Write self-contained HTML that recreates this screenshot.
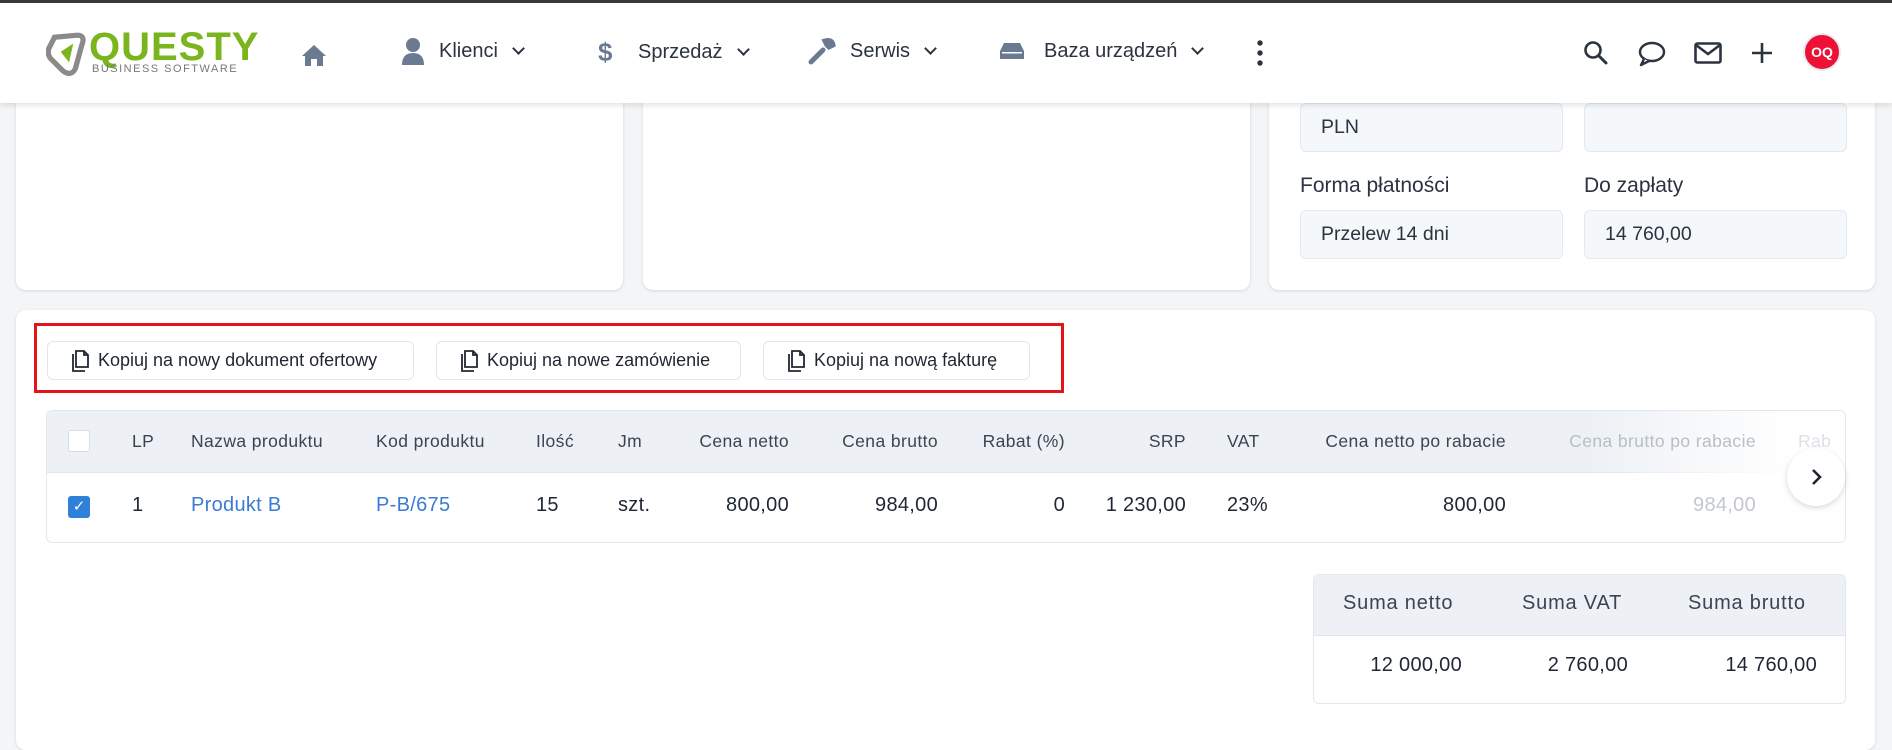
<!DOCTYPE html>
<html><head><meta charset="utf-8"><style>
*{box-sizing:border-box;margin:0;padding:0}
body{width:1892px;height:725px;overflow:hidden;background:#f4f5f7;font-family:"Liberation Sans",sans-serif;color:#2b3340;position:relative}
.a{position:absolute}
.card{position:absolute;background:#fff;border-radius:10px;box-shadow:0 1px 3px rgba(0,0,0,.12)}
.inp{position:absolute;background:#f5f8fb;border:1px solid #e3e9f0;border-radius:6px;font-size:19.5px;padding:0 20px;display:flex;align-items:center}
.lbl{position:absolute;font-size:21px;color:#2b3340}
.nav{position:absolute;top:40px;font-size:20px;color:#2b3340;display:flex;align-items:center;gap:8px;white-space:nowrap}
.chev{display:inline-block;width:9px;height:9px;border-right:2.2px solid #2b3340;border-bottom:2.2px solid #2b3340;transform:rotate(45deg);margin:-6px 0 0 8px}
.btn{position:absolute;top:341px;height:39px;border:1px solid #e1e6ec;border-radius:6px;background:#fff;font-size:18px;display:flex;align-items:center;padding-left:22px;gap:8px;color:#1f2733;white-space:nowrap}
.th{position:absolute;top:431px;font-size:17.5px;letter-spacing:.4px;color:#3b4452;white-space:nowrap}
.td{position:absolute;top:494px;font-size:20px;letter-spacing:.3px;color:#1f2733;white-space:nowrap}
.r{text-align:right}
</style></head><body>
<div class="a" style="left:0;top:0;width:1892px;height:3px;background:#3a3a3a"></div>
<div class="a" style="left:0;top:3px;width:1892px;height:100px;background:#fff;box-shadow:0 2px 6px rgba(0,0,0,.12);z-index:5">
 <svg class="a" style="left:46px;top:28px" width="42" height="46" viewBox="0 0 40 44"><path d="M8 6 L30 4 Q38 4 34 14 L28 36 Q24 44 16 38 L4 26 Q0 20 4 14 Z" fill="none" stroke="#8a8a8a" stroke-width="5"/><path d="M14 20 L26 12 L22 30 Z" fill="#7ab51d"/></svg>
 <div class="a" style="left:89px;top:22px;font-size:40px;font-weight:bold;color:#7ab51d;letter-spacing:1px;line-height:44px">QUESTY</div>
 <div class="a" style="left:92px;top:60px;font-size:11px;color:#777;letter-spacing:1.5px">BUSINESS SOFTWARE</div>
 <svg class="a" style="left:301px;top:40px" width="26" height="24" viewBox="0 0 26 24"><path d="M13 2 L1 13 L4 13 L4 23 L10 23 L10 16 L16 16 L16 23 L22 23 L22 13 L25 13 Z" fill="#6b7a90"/></svg>
</div>
<div style="position:absolute;z-index:6;left:0;top:0">
 <div class="nav" style="left:401px;top:37px"><svg width="24" height="28" viewBox="0 0 24 28"><circle cx="12" cy="8" r="7" fill="#6b7a90"/><path d="M1 28 Q1 16 12 16 Q23 16 23 28Z" fill="#6b7a90"/></svg><span style="margin-left:6px">Klienci</span><span class="chev"></span></div>
 <div class="nav" style="left:598px;top:37px"><span style="color:#6b7a90;font-size:26px;font-weight:bold;width:22px">$</span><span style="margin-left:10px">Sprzedaż</span><span class="chev"></span></div>
 <div class="nav" style="left:808px;top:37px"><svg width="28" height="28" viewBox="0 0 28 28"><path d="M3 25 L15 13 M17 4 Q24 2 25 8 L21 10 L19 8 Z" stroke="#6b7a90" stroke-width="5" fill="#6b7a90" stroke-linecap="round"/></svg><span style="margin-left:6px">Serwis</span><span class="chev"></span></div>
 <div class="nav" style="left:998px;top:37px"><svg width="28" height="28" viewBox="0 0 28 28"><path d="M2 14 L6 6 L22 6 L26 14 L26 22 L2 22 Z" fill="#6b7a90"/><rect x="4" y="15" width="20" height="1.5" fill="#fff"/></svg><span style="margin-left:10px">Baza urządzeń</span><span class="chev"></span></div>
 <svg class="a" style="left:1256px;top:40px" width="8" height="26"><circle cx="4" cy="3" r="2.7" fill="#2b3340"/><circle cx="4" cy="13" r="2.7" fill="#2b3340"/><circle cx="4" cy="23" r="2.7" fill="#2b3340"/></svg>
 <svg class="a" style="left:1583px;top:40px" width="26" height="26" viewBox="0 0 26 26"><circle cx="10" cy="10" r="7.5" fill="none" stroke="#2b3340" stroke-width="2.6"/><path d="M15.5 15.5 L23 23" stroke="#2b3340" stroke-width="3" stroke-linecap="round"/></svg>
 <svg class="a" style="left:1638px;top:41px" width="28" height="26" viewBox="0 0 28 26"><ellipse cx="14" cy="11" rx="12" ry="9" fill="none" stroke="#2b3340" stroke-width="2.4"/><path d="M6 18 L3 24 L11 20" fill="#fff" stroke="#2b3340" stroke-width="2.4" stroke-linejoin="round"/></svg>
 <svg class="a" style="left:1694px;top:42px" width="28" height="22" viewBox="0 0 28 22"><rect x="1.5" y="1.5" width="25" height="19" rx="2" fill="none" stroke="#2b3340" stroke-width="2.6"/><path d="M2 3 L14 12 L26 3" fill="none" stroke="#2b3340" stroke-width="2.6"/></svg>
 <svg class="a" style="left:1751px;top:42px" width="22" height="22"><path d="M11 1V21M1 11H21" stroke="#2b3340" stroke-width="2.6"/></svg>
 <div class="a" style="left:1803px;top:33px;width:38px;height:38px;border-radius:50%;background:#ee1136;border:2px solid #e8ebef;color:#fff;font-weight:bold;font-size:14px;display:flex;align-items:center;justify-content:center">OQ</div>
</div>

<div class="card" style="left:16px;top:80px;width:607px;height:210px"></div>
<div class="card" style="left:643px;top:80px;width:607px;height:210px"></div>
<div class="card" style="left:1269px;top:80px;width:606px;height:210px"></div>
<div class="inp" style="left:1300px;top:103px;width:263px;height:49px">PLN</div>
<div class="inp" style="left:1584px;top:103px;width:263px;height:49px"></div>
<div class="lbl" style="left:1300px;top:174px">Forma płatności</div>
<div class="lbl" style="left:1584px;top:174px">Do zapłaty</div>
<div class="inp" style="left:1300px;top:210px;width:263px;height:49px">Przelew 14 dni</div>
<div class="inp" style="left:1584px;top:210px;width:263px;height:49px">14 760,00</div>

<div class="card" style="left:16px;top:310px;width:1859px;height:440px"></div>
<div class="a" style="left:34px;top:323px;width:1030px;height:70px;border:3px solid #e4141b"></div>
<svg width="0" height="0" style="position:absolute"><defs><symbol id="cp" viewBox="0 0 20 24"><path d="M6 2 H14 L18 6 V18 H6 Z M14 2 V6 H18" fill="none" stroke="#1f2733" stroke-width="1.8"/><path d="M3 5 V22 H15" fill="none" stroke="#1f2733" stroke-width="1.8"/></symbol></defs></svg>
<div class="btn" style="left:47px;width:367px"><svg width="20" height="24"><use href="#cp"/></svg>Kopiuj na nowy dokument ofertowy</div>
<div class="btn" style="left:436px;width:305px"><svg width="20" height="24"><use href="#cp"/></svg>Kopiuj na nowe zamówienie</div>
<div class="btn" style="left:763px;width:267px"><svg width="20" height="24"><use href="#cp"/></svg>Kopiuj na nową fakturę</div>

<div class="a" style="left:46px;top:410px;width:1800px;height:133px;border:1px solid #e3e8ee;border-radius:6px;overflow:hidden;background:#fff">
 <div class="a" style="left:0;top:0;width:1800px;height:62px;background:#edf1f5;border-bottom:1px solid #e0e6ec"></div>
 <div class="a" style="left:1540px;top:0;width:260px;height:133px;background:linear-gradient(90deg,rgba(255,255,255,0),#fff 80%)"></div>
</div>
<div class="a" style="left:68px;top:430px;width:22px;height:22px;background:#fff;border:1px solid #d8dde3;border-radius:3px"></div>
<div class="a" style="left:68px;top:496px;width:22px;height:22px;background:#2f80d8;border-radius:3px;color:#fff;font-size:15px;text-align:center;line-height:22px">✓</div>
<div class="th" style="left:132px">LP</div>
<div class="th" style="left:191px">Nazwa produktu</div>
<div class="th" style="left:376px">Kod produktu</div>
<div class="th" style="left:536px">Ilość</div>
<div class="th" style="left:618px">Jm</div>
<div class="th r" style="left:589px;width:200px">Cena netto</div>
<div class="th r" style="left:738px;width:200px">Cena brutto</div>
<div class="th r" style="left:865px;width:200px">Rabat (%)</div>
<div class="th r" style="left:1036px;width:150px">SRP</div>
<div class="th" style="left:1227px">VAT</div>
<div class="th r" style="left:1256px;width:250px">Cena netto po rabacie</div>
<div class="th r" style="left:1506px;width:250px;color:#b8bec7">Cena brutto po rabacie</div>
<div class="th" style="left:1798px;color:#dde1e6">Rab</div>
<div class="td" style="left:132px">1</div>
<div class="td" style="left:191px;color:#3a7bd5">Produkt B</div>
<div class="td" style="left:376px;color:#3a7bd5">P-B/675</div>
<div class="td" style="left:536px">15</div>
<div class="td" style="left:618px">szt.</div>
<div class="td r" style="left:639px;width:150px">800,00</div>
<div class="td r" style="left:788px;width:150px">984,00</div>
<div class="td r" style="left:915px;width:150px">0</div>
<div class="td r" style="left:1036px;width:150px">1 230,00</div>
<div class="td" style="left:1227px">23%</div>
<div class="td r" style="left:1286px;width:220px">800,00</div>
<div class="td r" style="left:1536px;width:220px;color:#c3c8cf">984,00</div>
<div class="a" style="left:1787px;top:448px;width:58px;height:58px;border-radius:50%;background:#fff;box-shadow:0 2px 6px rgba(0,0,0,.15);display:flex;align-items:center;justify-content:center"><svg width="14" height="20"><path d="M4 3 L11 10 L4 17" fill="none" stroke="#1f2733" stroke-width="2.6"/></svg></div>

<div class="a" style="left:1313px;top:574px;width:533px;height:130px;border:1px solid #e3e8ee;border-radius:6px;background:#fff;overflow:hidden">
 <div class="a" style="left:0;top:0;width:533px;height:61px;background:#edf1f5;border-bottom:1px solid #e0e6ec"></div>
</div>
<div class="th" style="left:1343px;top:592px;font-size:20px;letter-spacing:.8px">Suma netto</div>
<div class="th" style="left:1522px;top:592px;font-size:20px;letter-spacing:.8px">Suma VAT</div>
<div class="th" style="left:1688px;top:592px;font-size:20px;letter-spacing:.8px">Suma brutto</div>
<div class="td r" style="left:1312px;top:654px;width:150px">12 000,00</div>
<div class="td r" style="left:1478px;top:654px;width:150px">2 760,00</div>
<div class="td r" style="left:1667px;top:654px;width:150px">14 760,00</div>
</body></html>
